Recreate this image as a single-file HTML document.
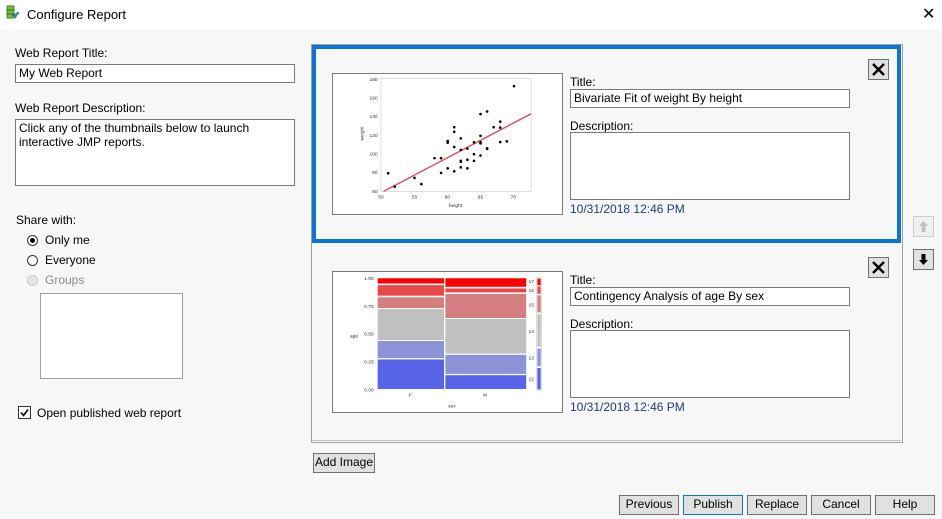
<!DOCTYPE html><html><head><style>
body{margin:0;width:942px;height:519px;background:#f7f7f7;font-family:"Liberation Sans",sans-serif;font-size:12px;color:#000;position:relative;overflow:hidden}
.a{position:absolute}
.in{position:absolute;background:#fff;border:1px solid #7a7a7a;box-sizing:border-box;padding:1px 3px;font-size:12px;line-height:14px}
.btn{position:absolute;background:#e1e1e1;border:1px solid #adadad;box-sizing:border-box;text-align:center;line-height:17px;font-size:12px;height:20px}
.xb{position:absolute;width:21px;height:21px;background:#e1e1e1;border:1px solid #707070;box-sizing:border-box}
.rad{position:absolute;width:11px;height:11px;border:1px solid #333;border-radius:50%;box-sizing:border-box;background:#fff}
</style></head><body>
<div class="a" style="left:0;top:0;width:942px;height:29px;background:#fff"></div>
<svg class="a" style="left:6px;top:5px" width="14" height="16" viewBox="0 0 14 16"><rect x="1" y="1" width="7" height="12" fill="#7ac143" stroke="#3a8a1a"/><line x1="1" y1="5" x2="8" y2="5" stroke="#2a6a10"/><line x1="1" y1="9" x2="8" y2="9" stroke="#2a6a10"/><path d="M6 11 L13 8 M9 13 L12 7" stroke="#2a6fc0" stroke-width="1.5"/></svg>
<div class="a" style="left:27px;top:7px;font-size:13px">Configure Report</div>
<div class="a" style="left:922px;top:4px;font-size:16px">✕</div>

<div class="a" style="left:15px;top:46px">Web Report Title:</div>
<div class="in" style="left:15px;top:64px;width:280px;height:19px">My Web Report</div>
<div class="a" style="left:15px;top:101px">Web Report Description:</div>
<div class="in" style="left:15px;top:119px;width:280px;height:67px">Click any of the thumbnails below to launch interactive JMP reports.</div>
<div class="a" style="left:16px;top:213px">Share with:</div>
<div class="rad" style="left:27px;top:235px"></div><div class="a" style="left:30px;top:238px;width:5px;height:5px;border-radius:50%;background:#000"></div>
<div class="a" style="left:45px;top:233px">Only me</div>
<div class="rad" style="left:27px;top:255px"></div><div class="a" style="left:45px;top:253px">Everyone</div>
<div class="rad" style="left:27px;top:275px;border-color:#ccc;background:#e6e6e6"></div><div class="a" style="left:45px;top:273px;color:#8a8a8a">Groups</div>
<div class="a" style="left:40px;top:293px;width:143px;height:86px;background:#fff;border:1px solid #a0a0a0;box-sizing:border-box"></div>
<div class="a" style="left:18px;top:406px;width:13px;height:13px;border:1px solid #333;box-sizing:border-box;background:#fff"></div>
<svg class="a" style="left:19px;top:407px" width="11" height="11"><path d="M2 5.5 L4.5 8.5 L9 2.5" stroke="#000" stroke-width="1.6" fill="none"/></svg>
<div class="a" style="left:37px;top:406px">Open published web report</div>

<div class="a" style="left:311px;top:44px;width:592px;height:399px;border:1px solid #a0a0a0;box-sizing:border-box;background:#f7f7f7"></div>
<div class="a" style="left:312px;top:45px;width:589px;height:198px;border:4px solid #0a74da;box-sizing:border-box"></div>
<div class="a" style="left:312px;top:243px;width:589px;height:198px;border-bottom:1px solid #c0c0c0;box-sizing:border-box"></div>

<svg class="a" style="left:332px;top:73px;background:#fff;border:1px solid #7a7a7a;box-sizing:border-box" width="231" height="142" viewBox="6 9 693 426">
<g font-family="Liberation Sans" font-size="15" fill="#333">
<rect x="150" y="22" width="457" height="344" fill="none" stroke="#ccc" stroke-width="2"/>
<g text-anchor="end"><text x="140" y="30">180</text><text x="140" y="87">160</text><text x="140" y="143">140</text><text x="140" y="200">120</text><text x="140" y="257">100</text><text x="140" y="314">80</text><text x="140" y="371">60</text></g>
<g text-anchor="middle"><text x="150" y="388">50</text><text x="252" y="388">55</text><text x="352" y="388">60</text><text x="453" y="388">65</text><text x="553" y="388">70</text><text x="377" y="414">height</text></g>
<text x="97" y="190" text-anchor="middle" transform="rotate(-90 97 190)">weight</text>
<line x1="158" y1="366" x2="607" y2="130" stroke="#e04050" stroke-width="4"/>
<g fill="#000">
<circle cx="172" cy="311" r="4"/><circle cx="192" cy="352" r="4"/><circle cx="252" cy="325" r="4"/><circle cx="273" cy="344" r="4"/><circle cx="313" cy="265" r="4"/><circle cx="333" cy="265" r="4"/><circle cx="333" cy="310" r="4"/><circle cx="353" cy="213" r="4"/><circle cx="353" cy="218" r="4"/><circle cx="353" cy="296" r="4"/><circle cx="373" cy="171" r="4"/><circle cx="373" cy="185" r="4"/><circle cx="373" cy="231" r="4"/><circle cx="373" cy="305" r="4"/><circle cx="393" cy="205" r="4"/><circle cx="393" cy="240" r="4"/><circle cx="393" cy="273" r="4"/><circle cx="393" cy="276" r="4"/><circle cx="393" cy="293" r="4"/><circle cx="413" cy="236" r="4"/><circle cx="413" cy="270" r="4"/><circle cx="413" cy="296" r="4"/><circle cx="433" cy="217" r="4"/><circle cx="433" cy="253" r="4"/><circle cx="433" cy="273" r="4"/><circle cx="453" cy="131" r="4"/><circle cx="453" cy="197" r="4"/><circle cx="453" cy="217" r="4"/><circle cx="453" cy="220" r="4"/><circle cx="453" cy="257" r="4"/><circle cx="473" cy="123" r="4"/><circle cx="473" cy="235" r="4"/><circle cx="473" cy="237" r="4"/><circle cx="493" cy="171" r="4"/><circle cx="513" cy="154" r="4"/><circle cx="513" cy="172" r="4"/><circle cx="513" cy="216" r="4"/><circle cx="533" cy="214" r="4"/><circle cx="555" cy="46" r="4"/>
</g></g></svg>

<svg class="a" style="left:332px;top:271px;background:#fff;border:1px solid #7a7a7a;box-sizing:border-box" width="231" height="142" viewBox="6 18 693 426">
<g font-family="Liberation Sans" font-size="15" fill="#333">
<rect x="140" y="37" width="202" height="16" fill="#f00"/><rect x="140" y="58" width="202" height="32" fill="#e84848"/><rect x="140" y="95" width="202" height="33" fill="#d47f7f"/><rect x="140" y="131" width="202" height="94" fill="#c0c0c0"/><rect x="140" y="228" width="202" height="52" fill="#8b93d6"/><rect x="140" y="284" width="202" height="90" fill="#5763e8"/>
<rect x="346" y="37" width="246" height="26" fill="#f00"/><rect x="346" y="68" width="246" height="12" fill="#e84848"/><rect x="346" y="85" width="246" height="73" fill="#d47f7f"/><rect x="346" y="161" width="246" height="105" fill="#c0c0c0"/><rect x="346" y="270" width="246" height="58" fill="#8b93d6"/><rect x="346" y="332" width="246" height="42" fill="#5763e8"/>
<rect x="623" y="35" width="16" height="342" fill="none" stroke="#ccc" stroke-width="2"/>
<rect x="626" y="38" width="10" height="20" fill="#f00"/><rect x="626" y="62" width="10" height="22" fill="#e84848"/><rect x="626" y="89" width="10" height="52" fill="#d47f7f"/><rect x="626" y="147" width="10" height="98" fill="#c0c0c0"/><rect x="626" y="251" width="10" height="54" fill="#8b93d6"/><rect x="626" y="310" width="10" height="65" fill="#5763e8"/>
<g text-anchor="start"><text x="599" y="52">17</text><text x="599" y="79">16</text><text x="599" y="123">15</text><text x="599" y="203">14</text><text x="599" y="285">13</text><text x="599" y="348">12</text></g>
<g text-anchor="end"><text x="128" y="42">1.00</text><text x="128" y="127">0.75</text><text x="128" y="212">0.50</text><text x="128" y="297">0.25</text><text x="128" y="381">0.00</text></g>
<text x="68" y="217" text-anchor="middle">age</text>
<g text-anchor="middle"><text x="240" y="397">F</text><text x="467" y="397">M</text><text x="366" y="430">sex</text></g>
</g></svg>

<div class="a" style="left:570px;top:75px">Title:</div>
<div class="in" style="left:570px;top:89px;width:280px;height:19px">Bivariate Fit of weight By height</div>
<div class="a" style="left:570px;top:119px">Description:</div>
<div class="in" style="left:570px;top:132px;width:280px;height:68px"></div>
<div class="a" style="left:570px;top:202px;color:#1f3f75">10/31/2018 12:46 PM</div>

<div class="a" style="left:570px;top:273px">Title:</div>
<div class="in" style="left:570px;top:287px;width:280px;height:19px">Contingency Analysis of age By sex</div>
<div class="a" style="left:570px;top:317px">Description:</div>
<div class="in" style="left:570px;top:330px;width:280px;height:68px"></div>
<div class="a" style="left:570px;top:400px;color:#1f3f75">10/31/2018 12:46 PM</div>

<div class="xb" style="left:868px;top:59px"></div><svg class="a" style="left:868px;top:59px" width="21" height="21"><path d="M5 5 L16 16 M16 5 L5 16" stroke="#000" stroke-width="2.4"/></svg>
<div class="xb" style="left:868px;top:257px"></div><svg class="a" style="left:868px;top:257px" width="21" height="21"><path d="M5 5 L16 16 M16 5 L5 16" stroke="#000" stroke-width="2.4"/></svg>

<div class="a" style="left:913px;top:216px;width:21px;height:21px;border:1px solid #ccc;box-sizing:border-box;background:#f0f0f0"></div>
<svg class="a" style="left:913px;top:216px" width="21" height="21"><path d="M10.5 5 L15 10 L12.5 10 L12.5 16 L8.5 16 L8.5 10 L6 10 Z" fill="#c0c0c0"/></svg>
<div class="a" style="left:913px;top:249px;width:21px;height:21px;border:1px solid #707070;box-sizing:border-box;background:#e1e1e1"></div>
<svg class="a" style="left:913px;top:249px" width="21" height="21"><path d="M10.5 16 L15 11 L12.5 11 L12.5 5 L8.5 5 L8.5 11 L6 11 Z" fill="#000"/></svg>

<div class="btn" style="left:313px;top:453px;width:62px;border-color:#707070">Add Image</div>
<div class="btn" style="left:619px;top:495px;width:60px;border-color:#707070">Previous</div>
<div class="btn" style="left:683px;top:495px;width:60px;border-color:#0a74da">Publish</div>
<div class="btn" style="left:747px;top:495px;width:60px;border-color:#707070">Replace</div>
<div class="btn" style="left:811px;top:495px;width:60px;border-color:#707070">Cancel</div>
<div class="btn" style="left:875px;top:495px;width:60px;border-color:#707070">Help</div>
</body></html>
